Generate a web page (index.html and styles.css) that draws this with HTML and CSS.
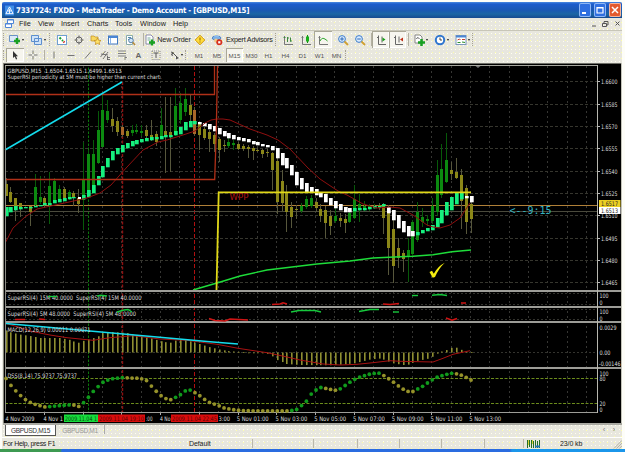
FILE: index.html
```html
<!DOCTYPE html>
<html lang="en">
<head>
<meta charset="utf-8">
<title>MetaTrader</title>
<link rel="stylesheet" href="styles.css">
</head>
<body>
<div class="window">
  <header class="titlebar">
    <svg class="logo" viewBox="0 0 10 11"><rect width="10" height="11" fill="#3f8ee8"/><path d="M5 1.5L9 9H1Z M5 4v5 M3 6l4 0" fill="none" stroke="#fff"/></svg>
    <span class="title">7337724: FXDD - MetaTrader - Demo Account - [GBPUSD,M15]</span>
    <div class="winbtns">
      <svg viewBox="0 0 12 13"><path d="M3 9.5h4" stroke="#fff" stroke-width="2"/></svg>
      <svg viewBox="0 0 12 13"><path d="M3 4h6v5.5H3z M3 4.5h6" fill="none" stroke="#fff" stroke-width="1.2"/></svg>
      <svg class="close" viewBox="0 0 12 13"><path d="M3 3.5l6 6M9 3.5l-6 6" stroke="#fff" stroke-width="1.5"/></svg>
    </div>
  </header>
  <nav class="menu">
    <svg class="docicon" viewBox="0 0 10 10"><path d="M2.5.5h6v4h-6z M.5 4.5h6v4h-6z" fill="#fff" stroke="#4f86d8"/><path d="M.5 5h6M2.5 1h6" stroke="#4f86d8"/></svg>
    <span class="m-file">File</span><span class="m-view">View</span><span class="m-insert">Insert</span><span class="m-charts">Charts</span><span class="m-tools">Tools</span><span class="m-window">Window</span><span>Help</span>
    <svg class="mdi" viewBox="0 0 32 10"><path d="M2 7h4M12.500 4.500h4v3h-4zM14 4V2.500h4V6h-1.500M25.500 2.500l4 4M29.500 2.500l-4 4" fill="none" stroke="#555"/></svg>
  </nav>
  <div class="bar bar-main">
    <i class="grip"></i>
    <b class="cell w20"><svg viewBox="0 0 16 12"><path d="M1.500 1.500h8v6h-8z" fill="#dceaf8" stroke="#6b93c4"/><path d="M6 7h6M9 4v6" stroke="#19a022" stroke-width="2.500"/></svg><u></u></b>
    <b class="cell w23"><svg viewBox="0 0 16 12"><path d="M1.500 1.500h7v6h-7zM4.500 4.500h7v6h-7z" fill="#cfe3f8" stroke="#5d8fce"/></svg><u></u></b>
    <i class="grip g4"></i>
    <b class="cell"><svg viewBox="0 0 12 12"><rect x="1.500" y="1.500" width="9" height="9" fill="#fff" stroke="#6f9fd0"/><path d="M3.500 3.500l1.500 1.500M6 6l1 1" stroke="#18a030" stroke-width="2"/><path d="M7.500 7.500l1 1" stroke="#d03020" stroke-width="2"/></svg></b>
    <b class="cell"><svg viewBox="0 0 12 12"><circle cx="6" cy="6" r="3" fill="none" stroke="#666"/><path d="M6 1.500v3M6 7.500v3M1.500 6h3M7.500 6h3" stroke="#666"/></svg></b>
    <b class="cell"><svg viewBox="0 0 12 12"><path d="M1 2h3l1 1h3v4H1z" fill="#f8d860" stroke="#c09020" stroke-width=".7"/><path d="M7.500 4l1.100 2.300 2.400.2-1.800 1.700.5 2.400-2.200-1.200-2.200 1.200.5-2.400L4 6.500l2.400-.2z" fill="#ffe36a" stroke="#c08a18" stroke-width=".7"/></svg></b>
    <b class="cell"><svg viewBox="0 0 12 12"><rect x="1.500" y="2" width="9" height="8" fill="#fff" stroke="#4079c0"/><path d="M2 3h8.500" stroke="#4b86d4" stroke-width="2"/><path d="M3.500 4v6" stroke="#8ab4e8"/></svg></b>
    <b class="cell"><svg viewBox="0 0 12 12"><path d="M2.500 1.500h6v9h-6z" fill="#fff" stroke="#8aa"/><path d="M4 3.500h3M4 5.500h2" stroke="#58a"/><circle cx="7" cy="6.500" r="2.300" fill="#cfe4f6" stroke="#5680ab"/><path d="M8.700 8.300L11 11" stroke="#b58a38" stroke-width="1.500"/></svg></b>
    <i class="sep w6"></i>
    <b class="cell order"><svg viewBox="0 0 12 12"><path d="M2 1h5l2 2v7H2z" fill="#fff" stroke="#779" stroke-width=".8"/><path d="M3.500 4h3M3.500 6h3" stroke="#7a9"/><path d="M5 8.500h6M8 5.500v6" stroke="#19a022" stroke-width="2.300"/></svg><span>New Order</span></b>
    <b class="cell"><svg viewBox="0 0 12 12"><path d="M6 1.200L10.800 6 6 10.800 1.200 6z" fill="#ffdd3c" stroke="#d09a10"/><path d="M6 3.500v3M6 7.500v1" stroke="#8a5a00"/></svg></b>
    <b class="cell expert"><svg viewBox="0 0 12 12"><ellipse cx="5.500" cy="4" rx="4.500" ry="2" fill="#7cb0e8" stroke="#3f76b8" stroke-width=".8"/><path d="M3 3c0-2 5-2 5 0" fill="#8dbcee"/><circle cx="5" cy="6.500" r="2" fill="#f0cb88"/><circle cx="8.300" cy="8.300" r="3" fill="#d7301c"/><rect x="7.200" y="7.200" width="2.200" height="2.200" fill="#fff"/></svg><span>Expert Advisors</span></b>
    <i class="grip g4"></i>
    <b class="cell w18"><svg viewBox="0 0 12 12"><path d="M2.500 2v8.500H11" fill="none" stroke="#777"/><path d="M1.500 3.500h2M5.500 3v5M5.500 4h1.500M8.500 3.500v4M8 7h2" stroke="#3d8a3d" fill="none"/></svg></b>
    <b class="cell"><svg viewBox="0 0 12 12"><path d="M2.500 2v8.500H11M1.500 3.500h2" fill="none" stroke="#777"/><path d="M7.500 1v8" stroke="#178a17"/><rect x="6" y="2.500" width="3" height="5" fill="#18b018"/></svg></b>
    <b class="cell w18 on"><svg viewBox="0 0 12 12"><path d="M2.500 2v8.500H11M1.500 3.500h2" fill="none" stroke="#777"/><path d="M3 7c2-4 4-3 7.500 0" fill="none" stroke="#1ca01c"/></svg></b>
    <i class="w2"></i>
    <b class="cell"><svg viewBox="0 0 12 12"><circle cx="5" cy="5" r="3.400" fill="#d9ebff" stroke="#3e7dc9"/><path d="M3.200 5h3.600M5 3.200v3.600" stroke="#2d67b4"/><path d="M7.500 7.500L11 11" stroke="#d0a030" stroke-width="1.800"/></svg></b>
    <b class="cell"><svg viewBox="0 0 12 12"><circle cx="5" cy="5" r="3.400" fill="#d9ebff" stroke="#3e7dc9"/><path d="M3.200 5h3.600" stroke="#2d67b4"/><path d="M7.500 7.500L11 11" stroke="#d0a030" stroke-width="1.800"/></svg></b>
    <i class="sep w4"></i>
    <b class="cell on"><svg viewBox="0 0 12 12"><path d="M3.500 1.500v9H11M2 3.500h1.500M7 2.500v6" fill="none" stroke="#666"/><path d="M7.500 3.500v4l3-2z" fill="#15a015"/></svg></b>
    <b class="cell on"><svg viewBox="0 0 12 12"><path d="M3.500 1.500v9H11M2 3.500h1.500M7 2.500v6" fill="none" stroke="#666"/><path d="M11 3.500v4l-3-2z" fill="#c03018"/></svg></b>
    <i class="sep w3"></i>
    <b class="cell w21"><svg viewBox="0 0 16 12"><path d="M3 1h5l2 2v6H3z" fill="#fff" stroke="#888"/><path d="M4.500 5c2-4 2 1 3-1" stroke="#555" fill="none"/><path d="M6 8.500h7M9.500 5v7" stroke="#19a022" stroke-width="2.500"/></svg><u></u></b>
    <b class="cell w21"><svg viewBox="0 0 16 12"><circle cx="7" cy="6" r="4.200" fill="#fff" stroke="#2f76cf" stroke-width="2"/><path d="M7 3.500V6h2" fill="none" stroke="#333" stroke-width=".9"/></svg><u></u></b>
    <b class="cell w21"><svg viewBox="0 0 16 12"><rect x="2" y="1.500" width="10" height="9" fill="#fff" stroke="#7b97bb"/><path d="M2 2.500h10" stroke="#4b86d4" stroke-width="2"/><path d="M3.500 6l2-1 1 1M8 5.500h3" fill="none" stroke="#c04030"/><path d="M3.500 8.500h3M8 8l3 .5" stroke="#2a902a"/></svg><u></u></b>
    <i class="grip g4"></i>
  </div>
  <div class="bar bar-draw">
    <i class="grip"></i>
    <b class="cell w18 on"><svg viewBox="0 0 12 12"><path d="M4 2v7l1.700-1.500L7 10.500l1.200-.6L7 7.200h2z" fill="#333"/></svg></b>
    <b class="cell"><svg viewBox="0 0 12 12"><path d="M6 1.500v3.500M6 7v3.500M1.500 6H5M7 6h3.500" stroke="#777"/></svg></b>
    <i class="sep w4"></i>
    <b class="cell"><svg viewBox="0 0 12 12"><path d="M6 2.500v7" stroke="#777"/></svg></b>
    <b class="cell"><svg viewBox="0 0 12 12"><path d="M2.500 6.500h7" stroke="#777"/></svg></b>
    <b class="cell"><svg viewBox="0 0 12 12"><path d="M3 9.500l6-7" stroke="#777"/></svg></b>
    <b class="cell"><svg viewBox="0 0 12 12"><path d="M1.500 8l5-6M4 10l5-7M2 5l7 1M8 8.500h3M8 10.500h3M8.500 7v4" stroke="#666" stroke-width=".9"/></svg></b>
    <b class="cell"><svg viewBox="0 0 12 12"><path d="M2 2h8M2 4.500h8M2 7h8M9 8v3M9 8.500h2" stroke="#777" stroke-width=".9"/></svg></b>
    <b class="cell glyph">A</b>
    <b class="cell"><svg viewBox="0 0 12 12"><rect x="2" y="2" width="8" height="8.500" fill="none" stroke="#888" stroke-dasharray="1 1"/><path d="M3.500 4h5M6 4v5" stroke="#555"/></svg></b>
    <b class="cell w21"><svg viewBox="0 0 16 12"><path d="M4 2.500l3 1-2 2.500zM9 7l3 2-3 1.500z" fill="#555"/><path d="M6 4l4 4M4 5.500l2 1" stroke="#555"/></svg><u></u></b>
    <i class="grip g5"></i>
    <b class="cell w18 tf">M1</b><b class="cell w18 tf">M5</b><b class="cell tf on">M15</b><b class="cell tf">M30</b><b class="cell tf">H1</b><b class="cell tf">H4</b><b class="cell tf">D1</b><b class="cell tf">W1</b><b class="cell tf">MN</b>
    <i class="grip g4"></i>
  </div>
  <main class="chart"><svg id="chart" width="619" height="362" viewBox="3 63 619 362"></svg></main>
  <div class="tabs"><span class="tab active">GBPUSD,M15</span><span class="tab">GBPUSD,M1</span><span class="scroll">‹</span><span class="scroll">›</span></div>
  <footer class="status">
    <span class="help">For Help, press F1</span><span class="profile">Default</span><i class="s61"></i><i class="s44"></i><i class="s42"></i><i class="s42"></i><i class="s43"></i><i class="s40"></i>
    <svg class="signal" viewBox="0 0 14 8"><path d="M.5 0v8M2.500 0v7M4.500 0v8M6.500 1v7M8.500 0v8M10.500 1v7M12.500 0v8" stroke="#267026"/><path d="M1.500 0v5M5.500 0v4" stroke="#d7d337"/><path d="M8 6.500h5" stroke="#2776b0" stroke-width="2"/></svg>
    <span>23/0 kb</span>
    <svg class="resize" viewBox="0 0 10 10"><path d="M1 10l9-9M4 10l6-6M7 10l3-3" stroke="#aaa89a"/></svg>
  </footer>
</div>
<div class="taskbar"></div>
<script src="chart.js"></script>
</body>
</html>
```
FILE: styles.css
```css
* { box-sizing: border-box; }
body {
  margin: 0;
  width: 625px;
  height: 452px;
  overflow: hidden;
  background: #fdfdf8;
  font-family: "Liberation Sans", Arial, sans-serif;
  font-size: 7.6px;
  color: #222;
}
.window {
  width: 620px;
  height: 449px;
  margin-left: 2px;
  padding-top: 2px;
  display: flex;
  flex-direction: column;
  background-color: #e8e7de;
  background-image:
    radial-gradient(circle at 1.5px 1.5px, #fffef0 0.8px, transparent 0.9px),
    radial-gradient(circle at 3.5px 4.5px, #ffffa8 0.6px, transparent 0.8px);
  background-size: 4px 4px, 7px 6px;
  box-shadow: inset 0 2px #fdfdf8;
}
.titlebar {
  height: 16px;
  display: flex;
  align-items: center;
  padding: 0 1px 0 3px;
  background: linear-gradient(#4a8ae0, #1c5ccc 2px, #1a58b4 8px, #1b66a4 12px, #164a90);
  border-radius: 2px 2px 0 0;
}
.logo { width: 9px; height: 11px; margin-right: 2px; }
.title {
  font-family: "DejaVu Sans Condensed", "DejaVu Sans", sans-serif;
  font-weight: bold;
  font-size: 7.8px;
  letter-spacing: -0.22px;
  white-space: nowrap;
  color: #fff;
}
.winbtns { margin-left: auto; display: flex; gap: 3px; }
.winbtns svg {
  width: 12px;
  height: 14px;
  border-radius: 2px;
  background: #2f6fe0;
  box-shadow: inset 0 0 0 1px #8db6f4;
}
.winbtns .close { background: #e35a2e; box-shadow: inset 0 0 0 1px #f3b49c; }
.menu { height: 13px; display: flex; align-items: center; padding-left: 3px; border-bottom: 1px solid #c8c6b8; }
.docicon { width: 10px; height: 10px; margin-right: 4px; }
.menu span { line-height: 12px; font-size: 7.3px; }
.m-file { width: 19px; }
.m-view { width: 23px; }
.m-insert { width: 26px; }
.m-charts { width: 28px; }
.m-tools { width: 25px; }
.m-window { width: 33px; }
.mdi { width: 32px; height: 10px; margin-left: auto; }
.bar { display: flex; align-items: stretch; padding-left: 1px; }
.bar-main { height: 17px; }
.bar-draw { height: 15px; padding-bottom: 1px; }
.grip { width: 3px; border-left: 1px dotted #a8a492; margin: 2px 0; }
.g4 { width: 4px; }
.g5 { width: 5px; }
.sep { border-right: 1px solid #b4b1a2; margin: 2px 0; }
.w2 { width: 2px; } .w3 { width: 3px; } .w4 { width: 4px; } .w6 { width: 6px; }
.cell { width: 17px; display: flex; align-items: center; justify-content: center; font-weight: normal; }
.cell svg { width: 12px; height: 12px; }
.w18 { width: 18px; }
.w20 { width: 20px; }
.w21 { width: 21px; }
.w23 { width: 23px; }
.w20 svg, .w21 svg, .w23 svg { width: 16px; }
.cell u { border: 1.5px solid transparent; border-top: 2px solid #222; margin: 1px 0 0 -2px; height: 2px; }
.on { background: #f6f5ee; box-shadow: inset 1px 1px #aaa898, inset -1px -1px #fff; }
.order { width: 47px; }
.order span { margin-left: 1px; white-space: nowrap; font-size: 7.2px; letter-spacing: -0.15px; }
.expert { width: 67px; justify-content: flex-start; padding-left: 3px; }
.expert span { margin-left: 3px; white-space: nowrap; font-size: 7.2px; letter-spacing: -0.22px; }
.glyph { font-size: 8px; color: #666; font-weight: bold; }
.tf { font-size: 6.2px; color: #555; }
.chart { height: 362px; margin-left: 1px; width: 619px; }
.chart svg { display: block; font-family: "DejaVu Sans Condensed", "DejaVu Sans", sans-serif; }
.tabs { height: 12px; display: flex; padding: 0 3px; align-items: flex-start; }
.tab { height: 11px; line-height: 11px; width: 49px; text-align: center; font-size: 6.6px; letter-spacing: -0.35px; color: #999; }
.tab.active { width: 51px; background: #fff; color: #333; border: 1px solid #555; border-top: 0; }
.tab + .tab { border-right: 1px solid #aaa; height: 9px; }
.scroll { color: #777; width: 10px; text-align: center; line-height: 9px; }
.tab + .scroll { margin-left: auto; }
.status { height: 12px; display: flex; align-items: center; padding-left: 1px; border-top: 1px solid #fff; }
.status span { white-space: nowrap; line-height: 11px; font-size: 7px; letter-spacing: -0.1px; }
.status .help { width: 186px; letter-spacing: -0.32px; }
.status .profile { width: 63px; letter-spacing: -0.1px; }
.status i { height: 9px; border-left: 1px solid #bbb8aa; }
.s61 { width: 61px; } .s44 { width: 44px; } .s42 { width: 42px; } .s43 { width: 43px; }
.s40 { width: 40px; border-right: 1px solid #bbb8aa; }
.signal { width: 14px; height: 8px; margin: 0 19px 0 3px; }
.resize { width: 9px; height: 10px; margin-left: auto; }
.taskbar { height: 3px; background: linear-gradient(90deg, #3e9a52 60px, #2a6ce0 62px, #2a6ce0 510px, #1b96ea 512px); }
```
FILE: chart.js
```js
const out = [];
const gx = k => 25.5 + 19.37 * k;
const cx = i => 6.1 + 4.843 * i;
const rect = (x, y, w, h, f) => out.push(`<rect x="${x}" y="${y}" width="${w}" height="${h}" fill="${f}"/>`);
const line = (pts, c, w = 1, extra = '') => out.push(`<polyline points="${pts}" fill="none" stroke="${c}" stroke-width="${w}" ${extra}/>`);
const text = (x, y, s, w, c = '#dedede', size = 6.2, extra = '') =>
  out.push(`<text x="${x}" y="${y}" fill="${c}" font-size="${size}" ${w ? `textLength="${w}" lengthAdjust="spacingAndGlyphs"` : ''} ${extra}>${s}</text>`);

// frame
rect(3, 63, 619, 362, '#000');
rect(3, 63, 619, 1, '#6f6f68');
rect(5, 65, 593, 1, '#a8a8a0');
rect(3, 63, 1, 362, '#85857c');
rect(621, 63, 1, 362, '#c4c4ba');
rect(3, 423, 619, 2, '#a9a9a2');

// grid
for (let k = 0; k < 30; k++) line(`${Math.round(gx(k)) - .5},66 ${Math.round(gx(k)) - .5},412`, '#363633', 1, 'stroke-dasharray="2 3"');
const prices = ['1.6600', '1.6585', '1.6570', '1.6555', '1.6540', '1.6525', '1.6510', '1.6495', '1.6480', '1.6465'];
prices.forEach((p, i) => {
  const y = Math.round(81.3 + i * 22.35);
  line(`5,${y + .5} 597,${y + .5}`, '#36362e', 1, 'stroke-dasharray="3 2"');
  rect(598, y, 2, 1, '#bbb');
  text(601, y + 2.8, p, 16.5);
});
[293.5, 304.5, 309.5, 319.5, 352.5].forEach(y => line(`5,${y} 597,${y}`, '#33332e', 1, 'stroke-dasharray="2 2"'));
[378.5, 403.5].forEach(y => line(`5,${y} 597,${y}`, '#6c8c1c', 1, 'stroke-dasharray="3 1.500"'));
rect(88, 66, 1, 346, '#0b780b');
line('88.5,66 88.5,412', '#000', 1, 'stroke-dasharray="1.500 2.500"');
line('122.5,82 122.5,412', '#8e1010', 1.4, 'stroke-dasharray="3 1.500"');
line('194.5,66 194.5,412', '#b01010', 1, 'stroke-dasharray="4 2"');

// price lines
line('5,205.5 597,205.5', '#b08038');
line('5,211.5 597,211.5', '#4a4a3c');

// candles: index, high, low, body top, body bottom, colour key
const G = '#0c8a10', O = '#8b8718', R = '#a8682a';
const candles = `0 178 196 184 196 o;1 187 203 192 202 o;2 198 221 198 206 o;3 203 217 203 207 o;5 206 226 206 212 o;6 174 206 187 205 g;7 176 204 197 202 g;8 196 208 198 203 o;9 172 224 186 204 g;10 178 203 181 202 g;11 185 202 189 202 g;12 187 200 189 198 o;13 190 200 192 198 g;14 191 206 193 197 o;15 189 213 198 204 o;16 142 230 180 200 g;17 150 197 154 192 g;18 140 190 154 187 g;19 111 164 130 163 g;20 95 147 110 147 g;21 100 123 111 120 g;22 108 132 119 126 o;23 117 136 121 132 o;24 125 137 127 135 r;25 129 138 131 136 o;26 125 136 130 133 g;27 124 134 130 132 g;28 125 136 131 133 g;29 125 139 130 136 o;30 120 141 135 137 o;31 131 146 134 142 o;32 108 138 125 137 g;33 97 173 131 135 o;34 97 172 132 136 o;35 88 136 106 135 g;36 93 124 103 120 g;37 88 116 99 112 g;38 95 121 105 115 o;39 107 136 110 134 r;40 122 150 124 135 o;41 127 140 129 138 o;42 130 152 132 139 o;43 133 152 135 144 o;44 137 162 139 150 o;45 140 152 145 146 o;46 138 148 142 146 g;47 140 150 143 145 g;48 142 150 144 149 o;49 144 151 146 149 o;50 145 158 147 149 o;51 146 160 148 151 o;52 148 152 150 151 o;53 149 158 150 154 o;54 149 157 152 153 o;55 152 190 153 170 o;56 155 214 161 202 o;57 170 211 181 203 o;58 185 232 192 212 o;59 202 228 207 217 o;60 205 219 209 210 o;61 203 213 206 211 g;62 196 209 199 207 g;63 195 208 198 206 g;64 198 212 202 208 o;65 204 222 209 216 o;66 206 238 210 223 o;67 210 235 216 226 o;68 207 223 216 221 g;69 213 227 218 221 o;70 214 233 219 223 o;71 209 223 213 222 g;72 185 219 199 218 g;73 194 222 204 209 g;74 201 211 206 208 g;75 204 211 206 208 g;76 204 209 206 207 g;77 203 210 205 208 o;78 203 234 204 218 o;79 205 275 207 248 o;80 210 283 229 266 o;81 238 268 248 258 o;82 250 272 253 259 o;83 238 282 250 257 g;84 220 256 222 254 g;85 202 242 212 240 g;86 208 227 217 222 g;87 215 226 219 221 g;88 198 224 206 221 g;89 160 216 175 212 g;90 144 198 169 195 g;91 133 183 160 182 g;92 162 180 170 174 o;93 158 179 172 178 o;94 169 229 175 201 o;95 185 234 188 222 o;96 198 233 204 219 o`;
candles.split(';').forEach(s => {
  const [i, h, l, t, b, c] = s.split(' ');
  const x = Math.round(cx(+i) - .5);
  rect(x, h, 1, l - h, c === 'g' ? '#075a09' : '#57573c');
  rect(x - 1, t, 3, b - t, c === 'g' ? G : c === 'r' ? R : O);
});

// smoothed candles: index, top, bottom
const smooth = `0 207 216;1 207 212;2 206 210;3 207 209;4 207 208;5 207 208;6 206 207;7 205 206;8 203 205;9 203 205;10 200 203;11 199 202;12 198 201;13 197 199;14 197 198;16 195 199;17 190 197;18 185 193;19 176 185;20 166 177;21 158 167;22 151 160;23 148 154;24 145 152;25 143 148;26 141 146;27 140 144;28 139 142;29 138 141;30 137 140;31 137 139;32 136 139;33 135 137;34 135 137;35 131 135;36 127 134;37 122 130;38 121 127;39 121 124;40 122 124;41 123 126;42 124 129;43 126 131;44 128 134;45 131 136;46 133 138;47 135 139;48 137 140;49 138 141;50 139 142;51 141 144;52 142 145;53 144 146;54 145 147;55 146 150;56 148 158;57 153 165;58 158 168;59 165 175;60 172 185;61 178 189;62 183 192;63 187 192;64 189 195;65 192 197;66 194 202;67 198 205;68 201 208;69 204 210;70 207 212;71 208 212;72 208 211;73 208 210;74 208 210;75 207 209;76 206 208;77 206 207;78 204 206;79 207 213;80 210 220;81 215 228;82 221 232;83 226 236;84 231 236;85 232 235;86 230 233;87 228 231;88 225 230;89 218 227;90 210 223;91 202 215;92 197 210;93 193 204;94 192 199;95 196 198;96 196 202`;
smooth.split(';').forEach(s => {
  const [i, t, b] = s.split(' ').map(Number);
  const up = i < 40 || (i > 71 && i < 79) || (i > 84 && i < 95);
  rect(Math.round(cx(i) - .5) - 1, t, 3.7, b - t + .3, up ? '#16f07e' : '#fff');
});
rect(78, 197, 3, 2, '#fff');

// overlays
line('5.700,242 13,228 25,217 37,209 60,204 87,198 100,193 111,185 127,167 143,150 158,142 167,140 183,135 195,131 205,123 211,120 217,119 223,119 230,120 250,129 267,135 278,140 290,149 308,168 320,179 338,191 347,195 363,204 377,208 390,207 400,208 413,215 427,225 433,227 440,228 450,225 460,218 470,203', '#8f0f0f');
line('193,290 210,285 217,283 240,276 267,270 317,264 350,261 373,258 400,256.700 413,256.300 433,254.700 452,251.700 471,250', '#1edc3a', 1.4);
line('5,94.500 214.500,94.500 214.500,66', '#b03018', 1.3);
line('217.500,66 216.300,130 214.700,179.500 5,179.500', '#b03018', 1.3);
line('5,150 122,82', '#14dcec', 1.6);
line('216.500,290 218.700,192.300 471,192.300', '#e0d818', 1.8);
text(229.500, 200, 'WPP', 19, '#b01414', 8);
text(509.500, 214, '&lt;--9:15', 42, '#35b4c0', 10, 'font-family="DejaVu Sans Mono"');
out.push('<path d="M429.500 272l2.500-1.300 1.800 3q4-7.500 11-11-6 5.500-9.800 14.300l-2.300.8z" fill="#f4ec10"/>');
out.push('<path d="M475.500 66h5l-2.500 2z" fill="#777"/>');
text(7.500, 72.800, 'GBPUSD,M15&#160;&#160;1.6504 1.6515 1.6499 1.6513', 114, '#dedede', 5.8);
text(7.500, 79.200, 'SuperRSI periodicity at 5M must be higher than current chart.', 154, '#dedede', 5.8);

// panel separators
[[290, 2], [306, 2], [321, 2], [367, 2], [412, 1]].forEach(([y, h]) => rect(5, y, y === 412 ? 593 : 616, h, '#9d9d98'));
rect(5, 66, 1, 346, '#8c8c84');
rect(597, 65, 1, 348, '#b8b8b0');

// SuperRSI
text(7.500, 300.300, 'SuperRSI(4) 15M 40.0000&#160;&#160;SuperRSI(4) 15M 40.0000', 134);
text(7.500, 316, 'SuperRSI(4) 5M 48.0000&#160;&#160;SuperRSI(4) 5M 48.0000', 128.500);
['48,296.500 57,296.500', '97,296 101,295.300 107,296', '412,295.500 418,295.500', '432,295.300 440,294.500 447,295.500', '117,312 124,310 128,309.500 132,312', '291,312 299,310.500 315,310.500 321,312', '359,311.500 370,309.500 379,309.500', '393,312 399,312'].forEach(p => line(p, '#16c83c', 1.4));
['272,304.500 280,304 283,302.700 287,304', '383,304 390,304.500 399,303.500', '461,303 466,303', '15,319.500 25,319.500', '39,319 45,319.500', '209,318.500 215,320.500 225,321 230,319 248,320', '446,318 452,320.300 457,318.500'].forEach(p => line(p, '#d01414', 1.5));
text(599.500, 298.300, '100', 9); text(599.500, 304.500, '0', 3);
text(599.500, 314.300, '100', 9); text(599.500, 320.500, '0', 3);

// interpolation through [x,y] control points
const at = (pts, x) => {
  for (let k = 1; k < pts.length; k++) if (x <= pts[k][0]) {
    const [a, b] = [pts[k - 1], pts[k]];
    return a[1] + (b[1] - a[1]) * (x - a[0]) / (b[0] - a[0]);
  }
  return pts[pts.length - 1][1];
};
const parse = s => s.split(' ').map(p => p.split(',').map(Number));

// MACD
const macd = parse('5,330 10,332 20,334.500 30,336 40,338 60,338 70,340 78,343 83,341 97,337 103,333 113,332 127,333 137,336 150,338 160,341 170,343 177,340 185,340 193,342 203,345 209,347 219,349.500 228,351 240,352 267,353.500 272,356 277,360 287,364 300,365 333,365.300 345,364.300 355,363.300 360,362 370,359.500 380,358.500 385,360 393,363.300 403,365 407,365 412,363.300 417,361 427,359 432,357 437,353.700 442,351.500 447,350 452,347.700 457,347.700 461,349.700 466,351.700 471,352');
for (let i = 0; i < 97; i++) {
  const y = at(macd, cx(i)), x = Math.round(cx(i) - .5);
  rect(x, Math.min(y, 352.500), 1.6, Math.max(.8, Math.abs(y - 352.500)), '#8f8f32');
}
line('6,323.500 20,327.500 33,331.700 50,335 67,337.700 93,340.300 110,337.700 133,335.700 160,339 187,340.300 217,344.300 238,348.300 267,352.700 287,357 300,360 323,364 340,365 357,364.300 373,362.700 390,360.700 400,361.300 433,362 443,358.300 453,354.300 470,350.700', '#a81212');
line('6,323.500 210,341.700 238,344', '#14dcec', 1.6);
text(7.500, 332, 'MACD(12,26,9) 0.00011 0.00071', 83);
text(599.500, 329.800, '0.0029', 17); text(599.500, 354.800, '0.00', 11); text(599, 366.200, '-0.00146', 21.500);

// DSS
const dss = parse('6,378.300 10,384.300 15,390 20,395 25,399.300 30,402.300 35,404.300 40,405.700 45,407 63,405.300 73,404.700 78,407 83,403.300 88,397.700 93,391.700 98,386.700 102,382.700 107,380.300 112,378.700 122,377.700 140,378.300 146,380 151,385.700 156,391 160,395 165,398.300 170,400 175,397.700 180,395 185,391 190,390 194.300,392.300 199,395 204,399 209,402.300 214,404 219,405.700 223,407.700 233,409.700 243,410.700 277,411 287,411 292,410.500 297,409.300 301,406 306,401.700 311,394.300 315,390.700 320,387.300 325,388.300 335,390.300 340,389 344,386.300 349,382.700 354,379.700 359,377.300 369,374.300 378,372.700 383,375 388,378.300 393,381.700 398,385.700 403,389 407,391.300 412,392 417,389.300 422,386.700 427,383.300 432,380 437,377.300 442,375.700 447,374.300 452,373.300 456,373.700 461,375 466,377.300 471,380');
for (let i = 0; i < 97; i++) {
  const y = at(dss, cx(i));
  const rising = i > 0 && y < at(dss, cx(i - 1)) - .1;
  out.push(`<circle cx="${cx(i)}" cy="${y}" r="1.900" fill="${rising ? '#109a1c' : '#96922a'}"/>`);
}
text(7.500, 378, 'DSS(8,14) 75.9737 75.9737', 69.500);
text(599.500, 376, '100', 9); text(599.500, 380.500, '80', 6); text(599.500, 405.700, '20', 6); text(599.500, 411.500, '0', 3);

// time axis
text(5.500, 421, '4 Nov 2009', 29);
text(43.500, 421, '4 Nov 1', 19.500);
text(146, 421, ':00', 6.500);
text(160, 421, '4 No', 10.500);
text(218.500, 421, '3:00', 11.500);
['01', '03', '05', '07', '09', '11', '13'].forEach((h, i) => {
  text(236.700 + i * 38.750, 421, `5 Nov ${h}:00`, 32);
});
for (let k = 1; k < 24; k += 2) rect(Math.round(gx(k)) - 1, 413, 1, 2, '#aaa');
[[64, 34, '#16dc3c', '2009.11.04 1', '#064a10'], [98, 47, '#d80c0c', '2009.11.04 19:10', '#5c0404'], [171, 47, '#d80c0c', '2009.11.04 22:45', '#5c0404']].forEach(([x, w, bg, s, c]) => {
  rect(x, 414.500, w, 7.500, bg);
  text(x + 1, 421, s, w - 2, c);
});

// current price tags
rect(599, 200, 21.500, 7, '#ecd024');
rect(599, 207, 21.500, 7, '#fff');
text(601, 206, '1.6517', 17, '#222');
text(601, 212.800, '1.6513', 17, '#222');

document.getElementById('chart').innerHTML = out.join('');
```
